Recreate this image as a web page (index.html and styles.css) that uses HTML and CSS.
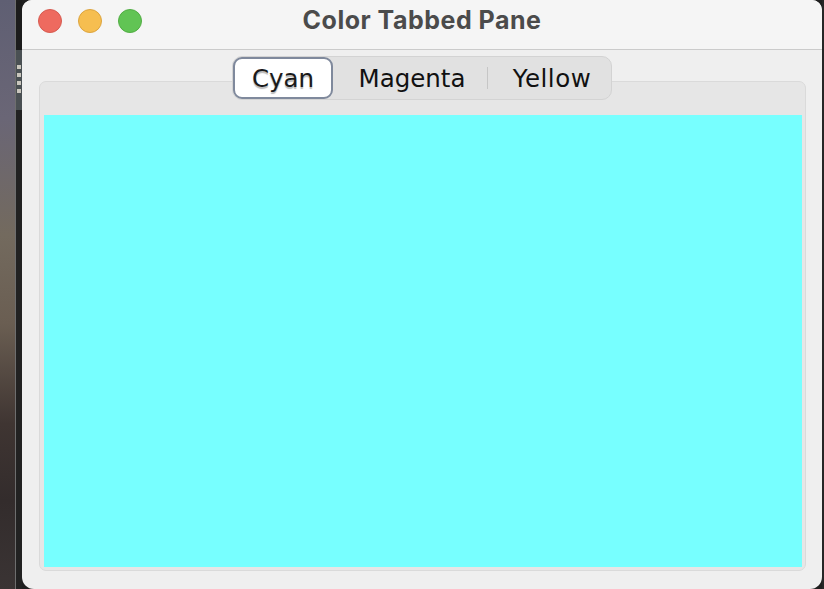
FILE: index.html
```html
<!DOCTYPE html>
<html>
<head>
<meta charset="utf-8">
<link rel="stylesheet" href="styles.css">
<title>Color Tabbed Pane</title>
</head>
<body>
<div class="screen">
  <div class="desktop"></div>
  <div class="backframe">
    <div class="frame-top"></div>
    <div class="frame-tools">
      <span class="dot"></span><span class="dot"></span><span class="dot"></span><span class="dot"></span>
    </div>
    <div class="frame-rest"></div>
  </div>
  <div class="window">
    <div class="titlebar">
      <div class="lights">
        <span class="light red"></span>
        <span class="light yellow"></span>
        <span class="light green"></span>
      </div>
      <div class="title">Color Tabbed Pane</div>
      <div></div>
    </div>
    <div class="content">
      <div class="tabrow">
        <div class="segmented">
          <div class="seg seg-cyan selected">Cyan</div>
          <div class="seg seg-magenta">Magenta</div>
          <div class="divider"></div>
          <div class="seg seg-yellow">Yellow</div>
        </div>
      </div>
      <div class="panel">
        <div class="color-area"></div>
      </div>
    </div>
  </div>
  <div class="rightedge"></div>
</div>
</body>
</html>
```
FILE: styles.css
```css
html, body {
  margin: 0;
  padding: 0;
  width: 824px;
  height: 589px;
  overflow: hidden;
  background: #1f1f1f;
}

.screen {
  display: flex;
  width: 824px;
  height: 589px;
}

.desktop {
  width: 15px;
  flex: none;
  background: linear-gradient(180deg, #5f5f73 0%, #6a6676 20%, #736a5e 40%, #6a5e52 55%, #3f3532 72%, #332c2c 85%, #3a3434 100%);
}

.backframe {
  width: 7px;
  flex: none;
  display: flex;
  flex-direction: column;
  border-left: 1px solid #6e6e6e;
  box-sizing: border-box;
  background: #1e1e1e;
}

.frame-top {
  height: 50px;
  background: #1c1c1c;
  border-top-left-radius: 10px;
}

.frame-tools {
  height: 60px;
  background: #4a5053;
  display: flex;
  flex-direction: column;
  gap: 4px;
  padding-top: 15px;
  box-sizing: border-box;
}

.dot {
  display: block;
  width: 4px;
  height: 4px;
  margin-left: 1px;
  background: #c9c6bd;
}

.frame-rest {
  flex: 1;
  background: #222222;
}

.window {
  width: 800px;
  height: 589px;
  flex: none;
  background: #efefef;
  border-radius: 10px 10px 12px 12px;
  overflow: hidden;
  display: flex;
  flex-direction: column;
}

.rightedge {
  flex: 1;
  background: #262626;
}

.titlebar {
  height: 49px;
  flex: none;
  background: #f5f5f5;
  border-bottom: 1px solid #cbcbcb;
  display: grid;
  grid-template-columns: 1fr auto 1fr;
  align-items: start;
}

.lights {
  display: flex;
  gap: 16px;
  padding-left: 16px;
  padding-top: 9px;
}

.light {
  display: block;
  width: 24px;
  height: 24px;
  border-radius: 50%;
  box-sizing: border-box;
}

.red { background: #ee6a5f; border: 1px solid #d65b51; }
.yellow { background: #f6be50; border: 1px solid #dca43f; }
.green { background: #61c454; border: 1px solid #52ad44; }

.title {
  font-family: Inter, "Liberation Sans", sans-serif;
  font-weight: 700;
  font-size: 25px;
  line-height: 40px;
  color: #4b4b4b;
  letter-spacing: 0.5px;
}

.content {
  flex: 1;
  display: flex;
  flex-direction: column;
  padding: 6px 16px 18px 16px;
  min-height: 0;
}

.tabrow {
  display: flex;
  justify-content: center;
  position: relative;
  z-index: 1;
  height: 44px;
}

.segmented {
  display: flex;
  align-items: center;
  height: 44px;
  box-sizing: border-box;
  background: #e1e1e1;
  border: 1px solid #d3d3d3;
  border-radius: 10px;
  font-family: "DejaVu Sans", Verdana, sans-serif;
  font-size: 24.5px;
  color: #111;
}

.seg {
  height: 42px;
  box-sizing: border-box;
  display: flex;
  align-items: center;
  justify-content: center;
}

.seg-cyan { width: 100px; }
.seg-magenta { width: 154px; padding-left: 4px; }
.seg-yellow { width: 123px; padding-left: 5px; letter-spacing: 0.5px; }

.selected {
  background: #ffffff;
  border: 2px solid #7f899c;
  border-radius: 9px;
  color: #1a1a1a;
  text-shadow: 0 1.5px 1px rgba(0, 0, 0, 0.28);
}

.divider {
  width: 1px;
  height: 22px;
  background: #c6c6c6;
}

.panel {
  flex: 1;
  margin-top: -19px;
  margin-left: 1px;
  background: #e6e6e6;
  border: 1px solid #dadada;
  border-radius: 7px;
  padding: 33px 3px 3px 4px;
  display: flex;
}

.color-area {
  flex: 1;
  background: #77ffff;
}
```
